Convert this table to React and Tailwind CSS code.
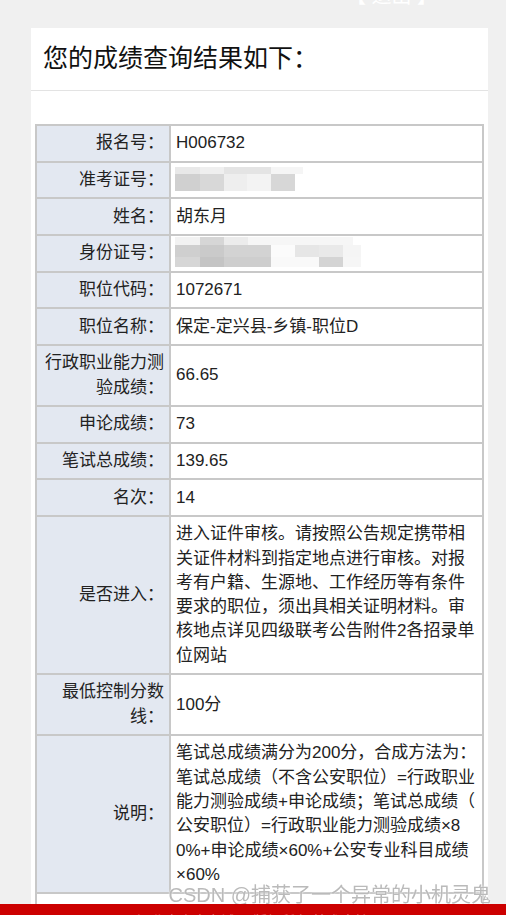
import React from "react";

function Mosaic({ w, rows }) {
  let y = 0;
  const h = rows.reduce((a, r) => a + r.h, 0);
  return (
    <svg width={w} height={h} viewBox={`0 0 ${w} ${h}`} className="block">
      {rows.map((r, i) => {
        const y0 = y;
        y += r.h;
        return r.segs.map(([a, b, c], j) => (
          <rect key={`${i}-${j}`} x={a} y={y0} width={b - a} height={r.h} fill={c} />
        ));
      })}
    </svg>
  );
}

const examMosaic = (
  <div className="-ml-[3px] -mt-[1px] mb-[1px]">
    <Mosaic
      w={130}
      rows={[
        { h: 7, segs: [[2, 27, "#e8e8e8"], [27, 51, "#efefef"], [51, 98, "#e4e4e4"], [98, 130, "#f5f5f5"]] },
        { h: 17, segs: [[2, 27, "#d0d0d0"], [27, 51, "#d8d8d8"], [51, 74, "#eeeeee"], [74, 98, "#f3f3f3"], [98, 122, "#d7d7d7"]] },
      ]}
    />
  </div>
);

const idMosaic = (
  <div className="-ml-[3px] -mt-[4px] -mb-[2px]">
    <Mosaic
      w={190}
      rows={[
        { h: 8, segs: [[2, 27, "#f2f2f2"], [27, 51, "#d6d6d6"], [51, 75, "#ececec"], [75, 180, "#f6f6f6"]] },
        { h: 12, segs: [[2, 27, "#cfcfcf"], [27, 51, "#cacaca"], [51, 98, "#d3d3d3"], [98, 122, "#fbfbfb"], [122, 146, "#e6e6e6"], [146, 170, "#e9e9e9"], [170, 188, "#f5f5f5"]] },
        { h: 10, segs: [[2, 27, "#d6d6d6"], [27, 51, "#c4c4c4"], [51, 98, "#cecece"], [98, 146, "#f9f9f9"], [146, 170, "#d4d4d4"], [170, 188, "#f6f6f6"]] },
      ]}
    />
  </div>
);

const rows = [
  { label: ["报名号："], value: ["H006732"] },
  { label: ["准考证号："], node: examMosaic },
  { label: ["姓名："], value: ["胡东月"] },
  { label: ["身份证号："], node: idMosaic },
  { label: ["职位代码："], value: ["1072671"] },
  { label: ["职位名称："], value: ["保定-定兴县-乡镇-职位D"] },
  { label: ["行政职业能力测", "验成绩："], value: ["66.65"] },
  { label: ["申论成绩："], value: ["73"] },
  { label: ["笔试总成绩："], value: ["139.65"] },
  { label: ["名次："], value: ["14"] },
  {
    label: ["是否进入："],
    value: [
      "进入证件审核。请按照公告规定携带相",
      "关证件材料到指定地点进行审核。对报",
      "考有户籍、生源地、工作经历等有条件",
      "要求的职位，须出具相关证明材料。审",
      "核地点详见四级联考公告附件2各招录单",
      "位网站",
    ],
  },
  { label: ["最低控制分数", "线："], value: ["100分"] },
  {
    label: ["说明："],
    value: [
      "笔试总成绩满分为200分，合成方法为：",
      "笔试总成绩（不含公安职位）=行政职业",
      "能力测验成绩+申论成绩；笔试总成绩（",
      "公安职位）=行政职业能力测验成绩×8",
      "0%+申论成绩×60%+公安专业科目成绩",
      "×60%",
    ],
  },
];

export default function App() {
  return (
    <div className="relative min-h-[915px] overflow-hidden bg-[#f0f0f0] font-['Liberation_Sans','Noto_Sans_CJK_SC',sans-serif] text-[#222]">
      <div className="h-[28px] overflow-hidden">
        <div className="-mt-[16px] pr-[69px] text-right text-[20px] leading-[24px] text-white">【 退出 】</div>
      </div>

      <div className="ml-[31px] mr-[18px] bg-white pb-[40px]">
        <div className="flex h-[63px] items-center border-b border-[#e3e3e3] px-[12px] text-[25px] text-[#111]">
          您的成绩查询结果如下：
        </div>
        <div className="px-[4px] pt-[33px]">
          <div className="grid grid-cols-[132px_minmax(0,1fr)] gap-[2px] bg-[#c8c8c8] p-[2px] text-[17px] leading-[24.3px]">
            {rows.map((r, i) => (
              <React.Fragment key={i}>
                <div className="flex items-center justify-end bg-[#e3e8f1] px-[5px] py-[5.2px]">
                  <div className="text-right">
                    {r.label.map((l, j) => (
                      <div key={j} className="whitespace-nowrap">{l}</div>
                    ))}
                  </div>
                </div>
                <div className="flex items-center bg-white px-[5px] py-[5.2px]">
                  {r.node ? (
                    r.node
                  ) : (
                    <div>
                      {r.value.map((l, j) => (
                        <div key={j} className="whitespace-nowrap">{l}</div>
                      ))}
                    </div>
                  )}
                </div>
              </React.Fragment>
            ))}
            <div className="col-span-2 h-[40px] bg-white" />
          </div>
        </div>
      </div>

      <div className="fixed bottom-[9px] right-[15px] text-[20px] leading-[22px] text-[#bababa] [text-shadow:0_0_2px_#fff]">
        CSDN @捕获了一个异常的小机灵鬼
      </div>
      <div className="fixed bottom-0 left-0 right-0 h-[11px] overflow-hidden bg-[#cc0000]">
        <div className="pt-[8px] text-center text-[14px] leading-[18px] text-[#e87070]">河北省人事考试网 版权所有 技术支持</div>
      </div>
    </div>
  );
}
